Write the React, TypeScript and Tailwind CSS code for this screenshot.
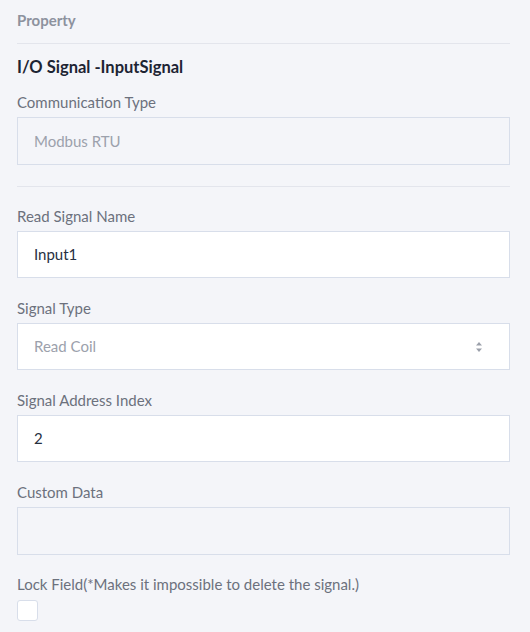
import { ReactNode } from "react";

const Field = ({ label, children }: { label: string; children: ReactNode }) => (
  <div className="mb-[20px]">
    <div className="h-[20px] leading-[20px] text-[15px] text-[#6c717d] mb-[5px]">{label}</div>
    {children}
  </div>
);

const boxBase =
  "flex items-center h-[47px] w-full border border-[#d8deea] pl-[16px] pr-[15px] text-[15px]";

const App = () => {
  return (
    <div
      className="min-h-screen bg-[#f4f5f9] pl-[17px] pr-[20px]"
      style={{ fontFamily: "Lato, 'Noto Sans', sans-serif" }}
    >
      <div className="h-[44px] border-b border-[#e3e5ec] flex items-center pb-[2px] text-[15px] font-bold text-[#8d929e]">
        Property
      </div>

      <div className="pt-[11px] h-[24px] box-content leading-[24px] text-[16.5px] font-bold text-[#1d2433]">
        I/O Signal -InputSignal
      </div>

      <div className="mt-[13px] h-[20px] leading-[20px] text-[15px] text-[#6c717d] mb-[5px]">
        Communication Type
      </div>
      <div className={`${boxBase} h-[48px] bg-[#f4f5f9] text-[#9ca1ac]`}>Modbus RTU</div>

      <div className="mt-[21px] mb-[19px] border-t border-[#e3e5ec]" />

      <Field label="Read Signal Name">
        <div className={`${boxBase} bg-white text-[#27303f]`}>Input1</div>
      </Field>

      <Field label="Signal Type">
        <div className={`${boxBase} bg-white justify-between`}>
          <span className="text-[#9ca1ac]">Read Coil</span>
          <svg width="8" height="12" viewBox="0 0 8 12" className="mr-[11px]">
            <path d="M4 1 L7 4.5 L1 4.5 Z" fill="#9ba0aa" />
            <path d="M4 11 L7 7.5 L1 7.5 Z" fill="#9ba0aa" />
          </svg>
        </div>
      </Field>

      <Field label="Signal Address Index">
        <div className={`${boxBase} bg-white text-[#27303f]`}>2</div>
      </Field>

      <Field label="Custom Data">
        <div className={`${boxBase} h-[48px] bg-[#f4f5f9]`} />
      </Field>

      <div className="-mt-[1px] h-[20px] leading-[20px] text-[15px] text-[#6c717d] mb-[6px]">
        Lock Field(*Makes it impossible to delete the signal.)
      </div>
      <div className="w-[21px] h-[21px] rounded-[3px] border border-[#d8deea] bg-white" />
    </div>
  );
};

export default App;
